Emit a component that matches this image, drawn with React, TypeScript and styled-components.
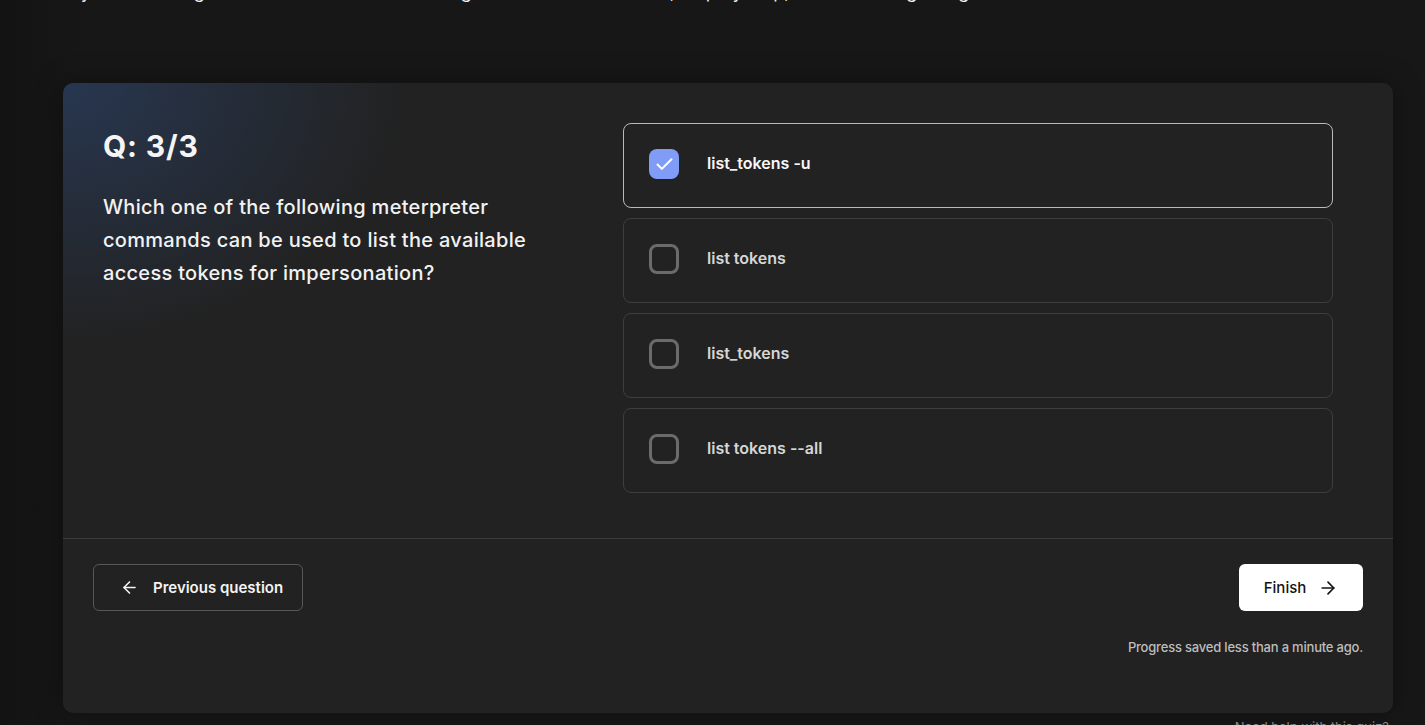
import React, { useState } from "react";
import styled, { createGlobalStyle } from "styled-components";
import { ArrowLeft, ArrowRight, Check } from "lucide-react";

const GlobalStyle = createGlobalStyle`
  html, body { margin: 0; padding: 0; }
  body {
    background: linear-gradient(90deg, #131313 0%, #171717 6%, #171717 100%);
    font-family: Inter, "Open Sans", Arial, sans-serif;
    color: #f2f2f2;
    overflow: hidden;
  }
`;

const Page = styled.div`
  padding: 0 32px 0 63px;
  min-height: 725px;
  box-sizing: border-box;
`;

const Intro = styled.p`
  margin: -22px 0 77px 0;
  font-size: 18px;
  line-height: 28px;
  color: #ededed;
  white-space: nowrap;
`;

const Card = styled.section`
  border-radius: 10px;
  background:
    radial-gradient(ellipse 340px 260px at 0 0, rgba(44, 72, 118, 0.55), rgba(44, 72, 118, 0) 100%),
    #222222;
  box-shadow: 0 0 28px rgba(0, 0, 0, 0.35);
  overflow: hidden;
`;

const Top = styled.div`
  display: grid;
  grid-template-columns: 1fr 710px;
  column-gap: 40px;
  padding: 40px 60px 45px 40px;
  border-bottom: 1px solid #3b3b3b;
`;

const QuestionCol = styled.div`
  padding-top: 6px;
`;

const Title = styled.h2`
  margin: 0;
  font-size: 30px;
  line-height: 34px;
  font-weight: 700;
  letter-spacing: 0.8px;
  color: #f5f5f5;
`;

const QuestionText = styled.p`
  margin: 28px 0 0 0;
  font-size: 20px;
  line-height: 33px;
  font-weight: 500;
  letter-spacing: 0.3px;
  color: #f2f2f2;
  max-width: 450px;
`;

const Options = styled.div`
  display: flex;
  flex-direction: column;
  gap: 10px;
`;

const Option = styled.button<{ $selected: boolean }>`
  display: flex;
  align-items: center;
  gap: 28px;
  height: 85px;
  padding: 0 25px 3px 25px;
  box-sizing: border-box;
  border-radius: 8px;
  border: 1px solid ${(p) => (p.$selected ? "#b9b9b9" : "#3e3e3e")};
  background: transparent;
  cursor: pointer;
  text-align: left;
  font-family: inherit;
`;

const Box = styled.span<{ $selected: boolean }>`
  width: 30px;
  height: 30px;
  box-sizing: border-box;
  border-radius: 8px;
  flex: none;
  display: flex;
  align-items: center;
  justify-content: center;
  background: ${(p) => (p.$selected ? "#809cf6" : "transparent")};
  border: ${(p) => (p.$selected ? "none" : "3px solid #6b6b6b")};
  color: #ffffff;
`;

const OptionLabel = styled.span<{ $selected: boolean }>`
  font-size: 16px;
  font-weight: 600;
  margin-top: -2px;
  color: ${(p) => (p.$selected ? "#f7f7f7" : "#d6d6d6")};
`;

const Bottom = styled.div`
  padding: 25px 30px 58px 30px;
`;

const NavRow = styled.div`
  display: flex;
  justify-content: space-between;
  align-items: center;
`;

const PrevButton = styled.button`
  display: flex;
  align-items: center;
  gap: 14px;
  height: 47px;
  width: 210px;
  padding: 0 0 0 26px;
  box-sizing: border-box;
  border: 1px solid #575757;
  border-radius: 6px;
  background: transparent;
  color: #f3f3f3;
  font-family: inherit;
  font-size: 15px;
  font-weight: 600;
  cursor: pointer;
`;

const FinishButton = styled.button`
  display: flex;
  align-items: center;
  gap: 12px;
  height: 47px;
  width: 124px;
  justify-content: center;
  box-sizing: border-box;
  border: none;
  border-radius: 6px;
  background: #ffffff;
  color: #141414;
  font-family: inherit;
  font-size: 15px;
  font-weight: 500;
  cursor: pointer;
`;

const Status = styled.p`
  margin: 28px 0 0 0;
  text-align: right;
  font-size: 13px;
  line-height: 16px;
  font-weight: 500;
  letter-spacing: -0.2px;
  color: #bdbdbd;
`;

const PageFooter = styled.p`
  margin: 6px 4px 0 0;
  text-align: right;
  font-size: 13px;
  line-height: 16px;
  color: #8a8a8a;
`;

const options = ["list_tokens -u", "list tokens", "list_tokens", "list tokens --all"];

export default function App() {
  const [selected, setSelected] = useState(0);
  return (
    <>
      <GlobalStyle />
      <Page>
        <Intro>
          Try the following short exercise to check the big ideas from this section, step by step, before moving along.
        </Intro>
        <Card>
          <Top>
            <QuestionCol>
              <Title>Q: 3/3</Title>
              <QuestionText>
                Which one of the following meterpreter commands can be used to list the available access tokens for
                impersonation?
              </QuestionText>
            </QuestionCol>
            <Options>
              {options.map((o, i) => (
                <Option key={o} $selected={selected === i} onClick={() => setSelected(i)}>
                  <Box $selected={selected === i}>{selected === i && <Check size={21} strokeWidth={2.3} />}</Box>
                  <OptionLabel $selected={selected === i}>{o}</OptionLabel>
                </Option>
              ))}
            </Options>
          </Top>
          <Bottom>
            <NavRow>
              <PrevButton>
                <ArrowLeft size={19} strokeWidth={2} />
                Previous question
              </PrevButton>
              <FinishButton>
                Finish
                <ArrowRight size={20} strokeWidth={2} />
              </FinishButton>
            </NavRow>
            <Status>Progress saved less than a minute ago.</Status>
          </Bottom>
        </Card>
        <PageFooter>Need help with this quiz?</PageFooter>
      </Page>
    </>
  );
}
